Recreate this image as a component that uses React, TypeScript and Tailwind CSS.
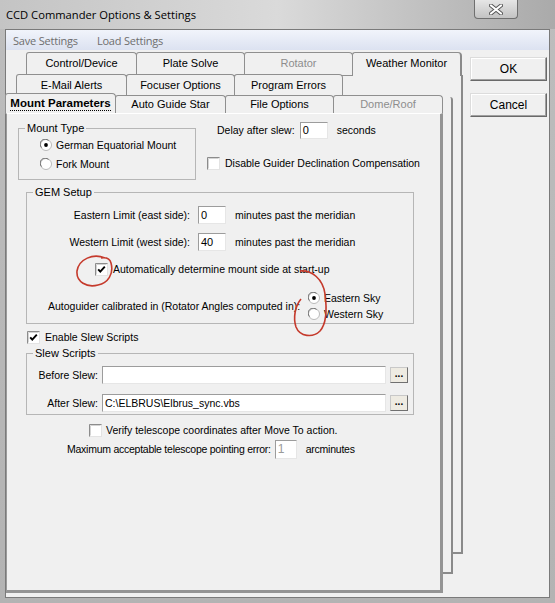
import React from 'react'

function Radio({ checked }: { checked?: boolean }) {
  return (
    <svg width="12" height="12" viewBox="0 0 12 12" className="shrink-0">
      <circle cx="6" cy="6" r="5.5" fill="#fff" stroke="#b9b9b9" />
      <path d="M1.6 8.6 A4.9 4.9 0 0 1 8.6 1.6" stroke="#6f6f6f" fill="none" />
      {checked && <circle cx="6" cy="6" r="1.9" fill="#000" />}
    </svg>
  )
}

function Check({ checked }: { checked?: boolean }) {
  return (
    <svg width="13" height="13" viewBox="0 0 13 13" className="shrink-0">
      <rect x="0.5" y="0.5" width="12" height="12" fill="#fff" stroke="#e3e3e3" />
      <path d="M0.5 12.5 V0.5 H12.5" stroke="#8c8c8c" fill="none" />
      <path d="M1.5 11.5 V1.5 H11.5" stroke="#d4d4d4" fill="none" />
      {checked && <path d="M3.2 6.3 L5.3 8.6 L9.8 3.6" stroke="#000" strokeWidth="1.9" fill="none" />}
    </svg>
  )
}

const sunken =
  'border border-t-[#9c9c9c] border-l-[#9c9c9c] border-r-[#e6e6e6] border-b-[#e6e6e6] bg-white'

function Tab({
  label,
  w,
  h,
  dim,
  bold,
  className = '',
}: {
  label: string
  w: string
  h: string
  dim?: boolean
  bold?: boolean
  className?: string
}) {
  return (
    <div
      className={`${w} ${h} shrink-0 bg-[#f0f0f0] border-l border-t border-r border-[#8f8f8f] rounded-tl-[3px] rounded-tr-[4px] flex items-center justify-center text-[11px] ${
        dim ? 'text-[#8d8d8d]' : 'text-black'
      } ${className}`}
    >
      {bold ? (
        <span className="font-bold text-[11.5px] leading-[13px] border-b border-dotted border-black">{label}</span>
      ) : (
        <span>{label}</span>
      )}
    </div>
  )
}

function Fieldset({ title, className, children }: { title: string; className: string; children: React.ReactNode }) {
  return (
    <fieldset className={`border border-[#b6b6b6] ${className}`}>
      <legend className="ml-[6px] px-[2px] leading-[13px] text-[11px]">{title}</legend>
      {children}
    </fieldset>
  )
}

function DotsButton() {
  return (
    <div className="ml-[4px] w-[18px] h-[16px] bg-[#eeebe2] border border-[#c8c8c8] border-r-[#707070] border-b-[#707070] flex items-end justify-center text-[10px] font-bold leading-[10px] pb-[3px]">
      ...
    </div>
  )
}

export default function App() {
  return (
    <div className="relative w-[555px] h-[603px] bg-gradient-to-b from-[#bdbdbd] to-[#b3b3b3] flex flex-col font-['Liberation_Sans',Arial,sans-serif] text-[10.5px] text-black leading-[13px] overflow-hidden">
      {/* title bar */}
      <div className="h-[29px] shrink-0 flex items-start bg-gradient-to-r from-[#c4c4c4] via-[#dadada] to-[#aaaaaa]">
        <span className="mt-[7px] ml-[6px] text-[11.2px] leading-[15px] font-['Open_Sans',sans-serif]">
          CCD Commander Options &amp; Settings
        </span>
        <div className="ml-auto mr-[37px] w-[44px] h-[19px] rounded-b-[4px] border border-t-0 border-[#6f6f6f] bg-gradient-to-b from-[#e6e6e6] to-[#c3c3c3] flex items-center justify-center">
          <svg width="14" height="11" viewBox="0 0 14 11">
            <path d="M2 1.5 L12 9.5 M12 1.5 L2 9.5" stroke="#555" strokeWidth="4" strokeLinecap="round" />
            <path d="M2 1.5 L12 9.5 M12 1.5 L2 9.5" stroke="#fff" strokeWidth="2.2" strokeLinecap="round" />
          </svg>
        </div>
      </div>

      {/* client area */}
      <div className="flex-1 mx-[5px] mb-[5px] border border-[#7a7a7a] bg-[#f0f0f0] flex flex-col">
        {/* menu bar */}
        <div className="h-[20px] shrink-0 flex items-center pl-[7px] gap-[19px] bg-gradient-to-b from-[#f1f4fb] to-[#dce2f1] text-[#6e6e6e] text-[11px] font-['Open_Sans',sans-serif] tracking-[-0.2px]">
          <span>Save Settings</span>
          <span>Load Settings</span>
        </div>

        <div className="flex-1 flex">
          {/* tab control */}
          <div className="relative w-[457px] shrink-0">
            {/* pages stacked behind */}
            <div className="absolute z-0 left-[20px] top-[25px] w-[437px] h-[479px] bg-[#f0f0f0] border-t border-t-[#8f8f8f] border-r-2 border-b-2 border-[#8a8a8a]" />
            <div className="absolute z-[1] left-[10px] top-[47px] w-[437px] h-[477px] bg-[#f0f0f0] border-r-2 border-b-2 border-[#8a8a8a] rounded-tr-[3px]" />

            <div className="relative z-[2] flex mt-[2px] h-[22px] pl-[20px]">
              <Tab label="Control/Device" w="w-[111px]" h="h-[22px]" />
              <Tab label="Plate Solve" w="w-[109px]" h="h-[22px]" className="-ml-px" />
              <Tab label="Rotator" w="w-[109px]" h="h-[22px]" dim className="-ml-px" />
              <Tab
                label="Weather Monitor"
                w="w-[110px]"
                h="h-[24px]"
                className="-ml-px border-r-2 border-r-[#8a8a8a] pb-[2px]"
              />
            </div>
            <div className="relative z-[2] flex h-[21px] pl-[10px]">
              <Tab label="E-Mail Alerts" w="w-[111px]" h="h-[21px]" />
              <Tab label="Focuser Options" w="w-[109px]" h="h-[21px]" className="-ml-px" />
              <Tab label="Program Errors" w="w-[109px]" h="h-[21px]" className="-ml-px" />
            </div>
            <div className="relative z-[3] flex items-end h-[18px]">
              <Tab label="Mount Parameters" w="w-[111px]" h="h-[21px]" bold className="-ml-px relative z-[4] -mb-px" />
              <Tab label="Auto Guide Star" w="w-[111px]" h="h-[18px]" className="-ml-px" />
              <Tab label="File Options" w="w-[109px]" h="h-[18px]" className="-ml-px" />
              <Tab label="Dome/Roof" w="w-[110px]" h="h-[18px]" dim className="-ml-px" />
            </div>

            {/* main page */}
            <div className="relative z-[3] w-[437px] h-[480px] bg-[#f0f0f0] border-t border-t-white border-l border-l-[#9a9a9a] border-r-[3px] border-r-[#949494] border-b-[3px] border-b-[#949494] flex flex-col">
              <div className="flex items-start mt-[8px]">
                <Fieldset title="Mount Type" className="ml-[11px] w-[178px] h-[58px] shrink-0">
                  <div className="flex flex-col pl-[21px] pt-[3px] gap-[5px]">
                    <div className="flex items-center gap-[4px] h-[14px]">
                      <Radio checked />
                      <span>German Equatorial Mount</span>
                    </div>
                    <div className="flex items-center gap-[4px] h-[14px]">
                      <Radio />
                      <span>Fork Mount</span>
                    </div>
                  </div>
                </Fieldset>
                <div className="ml-[11px] flex flex-col">
                  <div className="flex items-center pl-[10px] h-[17px]">
                    <span>Delay after slew:</span>
                    <div className={`ml-[5px] w-[28px] h-[17px] ${sunken} pl-[2px] leading-[15px] text-[11px]`}>0</div>
                    <span className="ml-[9px]">seconds</span>
                  </div>
                  <div className="flex items-center gap-[5px] mt-[18px] h-[13px]">
                    <Check />
                    <span>Disable Guider Declination Compensation</span>
                  </div>
                </div>
              </div>

              <Fieldset title="GEM Setup" className="mt-[6px] ml-[19px] w-[388px] h-[138px] shrink-0">
                <div className="flex items-center mt-[7px]">
                  <span className="w-[163px] text-right">Eastern Limit (east side):</span>
                  <div className={`ml-[8px] w-[28px] h-[18px] ${sunken} pl-[2px] leading-[16px] text-[11px]`}>0</div>
                  <span className="ml-[9px]">minutes past the meridian</span>
                </div>
                <div className="flex items-center mt-[9px]">
                  <span className="w-[163px] text-right">Western Limit (west side):</span>
                  <div className={`ml-[8px] w-[28px] h-[18px] ${sunken} pl-[2px] leading-[16px] text-[11px]`}>40</div>
                  <span className="ml-[9px]">minutes past the meridian</span>
                </div>
                <div className="flex items-center gap-[5px] mt-[12px] pl-[68px] h-[13px]">
                  <Check checked />
                  <span>Automatically determine mount side at start-up</span>
                </div>
                <div className="flex items-center mt-[14px]">
                  <span className="w-[281px] pl-[21px] whitespace-nowrap">Autoguider calibrated in (Rotator Angles computed in):</span>
                  <div className="flex flex-col">
                    <div className="flex items-center gap-[4px] h-[16px]">
                      <Radio checked />
                      <span>Eastern Sky</span>
                    </div>
                    <div className="flex items-center gap-[4px] h-[16px]">
                      <Radio />
                      <span>Western Sky</span>
                    </div>
                  </div>
                </div>
              </Fieldset>

              <div className="flex items-center gap-[5px] mt-[7px] ml-[20px] h-[13px]">
                <Check checked />
                <span>Enable Slew Scripts</span>
              </div>

              <Fieldset title="Slew Scripts" className="mt-[3px] ml-[19px] w-[388px] h-[68px] shrink-0">
                <div className="flex items-center mt-[6px]">
                  <span className="w-[71px] text-right">Before Slew:</span>
                  <div className={`ml-[4px] w-[284px] h-[18px] ${sunken} bg-[#f0f0f0]`} />
                  <DotsButton />
                </div>
                <div className="flex items-center mt-[10px]">
                  <span className="w-[71px] text-right">After Slew:</span>
                  <div className={`ml-[4px] w-[284px] h-[18px] ${sunken} pl-[2px] leading-[16px]`}>
                    C:\ELBRUS\Elbrus_sync.vbs
                  </div>
                  <DotsButton />
                </div>
              </Fieldset>

              <div className="flex items-center gap-[4px] mt-[9px] ml-[82px] h-[13px]">
                <Check />
                <span>Verify telescope coordinates after Move To action.</span>
              </div>
              <div className="flex items-center mt-[3px] ml-[60px]">
                <span className="tracking-[-0.25px]">Maximum acceptable telescope pointing error:</span>
                <div className={`ml-[4px] w-[22px] h-[19px] ${sunken} bg-[#f7f7f7] text-[#9a9a9a] pl-[2px] leading-[17px] text-[12px]`}>
                  1
                </div>
                <span className="ml-[9px] tracking-[-0.25px]">arcminutes</span>
              </div>
            </div>
          </div>

          {/* buttons */}
          <div className="ml-[7px] mt-[7px] flex flex-col gap-[12px]">
            {['OK', 'Cancel'].map((b) => (
              <div
                key={b}
                className="w-[77px] h-[24px] bg-[#f0f0f0] border border-[#dcdcdc] border-r-[#696969] border-b-[#696969] shadow-[inset_-1px_-1px_0_#a0a0a0,inset_1px_1px_0_#ffffff] flex items-center justify-center text-[12px]"
              >
                {b}
              </div>
            ))}
          </div>
        </div>
      </div>

      {/* hand-drawn red marks */}
      <svg className="absolute z-10 left-0 top-0 pointer-events-none" width="555" height="603" viewBox="0 0 555 603">
        <path
          d="M105 258 C 93 253, 79 259, 77 271 C 76 282, 87 288, 98 285 C 108 283, 114 274, 111 263 C 110 259, 107 257, 101 258"
          stroke="#c53a2c"
          strokeWidth="1.6"
          fill="none"
        />
        <path
          d="M300 271 C 312 270, 323 279, 325 294 C 327 309, 327 323, 320 331 C 313 338, 300 337, 296 327 C 293 318, 295 306, 301 299"
          stroke="#c53a2c"
          strokeWidth="1.6"
          fill="none"
        />
      </svg>
    </div>
  )
}
